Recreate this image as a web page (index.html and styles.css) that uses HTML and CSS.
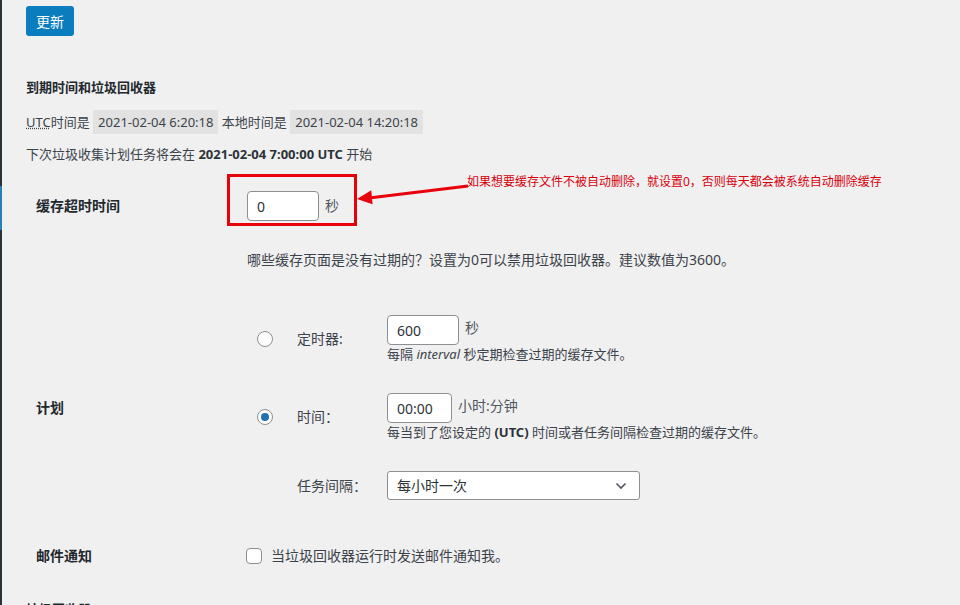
FILE: index.html
```html
<!DOCTYPE html>
<html lang="zh-CN">
<head>
    <meta charset="UTF-8">
    <title>垃圾回收器设置</title>
    <link rel="stylesheet" href="styles.css">
</head>
<body>
    <div class="page">
        <div class="menu-edge"><div class="menu-current"></div></div>
        <div class="wrap">
            <button type="button" class="button-primary">更新</button>

            <h3 class="section-title">到期时间和垃圾回收器</h3>
            <p class="times"><abbr title="Coordinated Universal Time">UTC</abbr>时间是 <code>2021-02-04 6:20:18</code> 本地时间是 <code>2021-02-04 14:20:18</code></p>
            <p class="next-run">下次垃圾收集计划任务将会在 <strong>2021-02-04 7:00:00 UTC</strong> 开始</p>

            <div class="form-table">
                <div class="row row-timeout">
                    <div class="th th-top">缓存超时时间</div>
                    <div class="td">
                        <div class="field-line">
                            <input type="text" class="small-text w72" value="0"> <span class="unit">秒</span>
                        </div>
                        <p class="description">哪些缓存页面是没有过期的？设置为0可以禁用垃圾回收器。建议数值为3600。</p>
                    </div>
                </div>

                <div class="row row-schedule">
                    <div class="th th-middle">计划</div>
                    <div class="td">
                        <div class="schedule">
                            <span class="radio"></span>
                            <span class="opt-label">定时器:</span>
                            <div class="opt-field">
                                <div class="field-line">
                                    <input type="text" class="small-text w72" value="600"> <span class="unit">秒</span>
                                </div>
                                <div class="hint">每隔 <em>interval</em> 秒定期检查过期的缓存文件。</div>
                            </div>

                            <span class="radio checked"></span>
                            <span class="opt-label">时间：</span>
                            <div class="opt-field">
                                <div class="field-line">
                                    <input type="text" class="small-text w65" value="00:00"> <span class="unit">小时:分钟</span>
                                </div>
                                <div class="hint">每当到了您设定的 <strong>(UTC)</strong> 时间或者任务间隔检查过期的缓存文件。</div>
                            </div>

                            <span></span>
                            <span class="opt-label">任务间隔：</span>
                            <div class="opt-field">
                                <div class="select">
                                    <span>每小时一次</span>
                                    <svg width="12" height="8" viewBox="0 0 12 8"><polyline points="1.5,1.5 6,6 10.5,1.5" fill="none" stroke="#50575e" stroke-width="1.6"/></svg>
                                </div>
                            </div>
                        </div>
                    </div>
                </div>

                <div class="row row-mail">
                    <div class="th th-middle">邮件通知</div>
                    <div class="td">
                        <label class="check-line"><span class="checkbox"></span>当垃圾回收器运行时发送邮件通知我。</label>
                    </div>
                </div>
            </div>

            <h3 class="section-title next-section">垃圾回收器</h3>
        </div>

        <!-- screenshot annotation -->
        <svg class="annotation" width="960" height="605" viewBox="0 0 960 605">
            <rect x="228.5" y="175.5" width="127" height="49" fill="none" stroke="#e8000b" stroke-width="3"/>
            <line x1="468" y1="186" x2="369" y2="198" stroke="#e8000b" stroke-width="3"/>
            <polygon points="357,199 372.6,204.3 371.2,190.3" fill="#e8000b"/>
        </svg>
        <div class="annotation-text">如果想要缓存文件不被自动删除，就设置0，否则每天都会被系统自动删除缓存</div>
    </div>
</body>
</html>
```

FILE: styles.css
```css
body {
    margin: 0;
    background-color: #f0f0f1;
    color: #3c434a;
    font-family: "Noto Sans", "Noto Sans CJK SC", sans-serif;
    font-size: 13px;
    line-height: 20px;
}

.page {
    position: relative;
    display: flex;
    min-height: 605px;
    overflow: hidden;
}

.menu-edge {
    width: 2px;
    background-color: #2c3338;
    flex-shrink: 0;
}
.menu-current {
    margin-top: 186px;
    height: 44px;
    background-color: #2a7fb8;
}

.wrap {
    padding: 6px 0 0 24px;
    flex: 1;
}

.button-primary {
    display: block;
    width: 48px;
    height: 30px;
    padding: 0;
    border: none;
    border-radius: 3px;
    background-color: #0a7dbf;
    color: #fff;
    font-family: inherit;
    font-size: 14px;
}

.section-title {
    margin: 41px 0 0;
    font-size: 13px;
    font-weight: bold;
    color: #23282d;
    line-height: 20px;
}

.times {
    margin: 13px 0 0;
    line-height: 24px;
}
abbr {
    text-decoration: underline dotted;
}
code {
    background-color: #e2e2e2;
    padding: 3px 5px;
    font-family: inherit;
    font-size: 13px;
}

.next-run {
    margin: 10px 0 0;
}
.next-run strong {
    color: #2c3338;
}

.form-table {
    margin-top: 12px;
}

.row {
    display: grid;
    grid-template-columns: 221px 1fr;
}

.th {
    padding-left: 10px;
    font-size: 14px;
    font-weight: bold;
    color: #23282d;
}
.th-top {
    padding-top: 20px;
}
.th-middle {
    align-self: center;
}

.td {
    padding: 15px 0;
    font-size: 14px;
}

.field-line {
    display: flex;
    align-items: center;
}

.small-text {
    box-sizing: border-box;
    height: 30px;
    padding: 0 9px;
    border: 1px solid #8c8f94;
    border-radius: 4px;
    background-color: #fff;
    color: #2c3338;
    font-family: inherit;
    font-size: 14px;
}
.w72 {
    width: 72px;
}
.w65 {
    width: 65px;
}

.unit {
    margin-left: 6px;
    color: #50575e;
}
.field-line .unit {
    align-self: flex-start;
    margin-top: 3px;
}
.row-timeout .unit {
    align-self: center;
    margin-top: 0;
}

.description {
    margin: 29px 0 0;
}

.schedule {
    display: grid;
    grid-template-columns: 50px 90px 1fr;
    row-gap: 30px;
    align-items: center;
    padding-top: 15px;
    padding-bottom: 15px;
}

.radio {
    box-sizing: border-box;
    width: 16px;
    height: 16px;
    margin-left: 10px;
    border: 1px solid #8c8f94;
    border-radius: 50%;
    background-color: #fff;
    position: relative;
}
.radio.checked::after {
    content: "";
    position: absolute;
    left: 3px;
    top: 3px;
    width: 8px;
    height: 8px;
    border-radius: 50%;
    background-color: #2271b1;
}

.opt-label {
    color: #3c434a;
}

.hint {
    line-height: 18px;
    font-size: 13px;
}
.hint strong {
    color: #2c3338;
}

.select {
    box-sizing: border-box;
    width: 253px;
    height: 29px;
    padding: 0 12px 0 9px;
    border: 1px solid #8c8f94;
    border-radius: 3px;
    background-color: #fff;
    display: flex;
    align-items: center;
    justify-content: space-between;
    color: #2c3338;
}

.check-line {
    display: flex;
    align-items: center;
    height: 22px;
    margin-left: -1px;
}
.checkbox {
    box-sizing: border-box;
    width: 16px;
    height: 16px;
    margin-right: 9px;
    border: 1px solid #8c8f94;
    border-radius: 4px;
    background-color: #fff;
}

.next-section {
    margin-top: 17px;
}

.annotation {
    position: absolute;
    left: 0;
    top: 0;
    pointer-events: none;
}
.annotation-text {
    position: absolute;
    left: 467px;
    top: 174px;
    font-size: 12px;
    line-height: 16px;
    color: #d8000b;
    white-space: nowrap;
}
```
